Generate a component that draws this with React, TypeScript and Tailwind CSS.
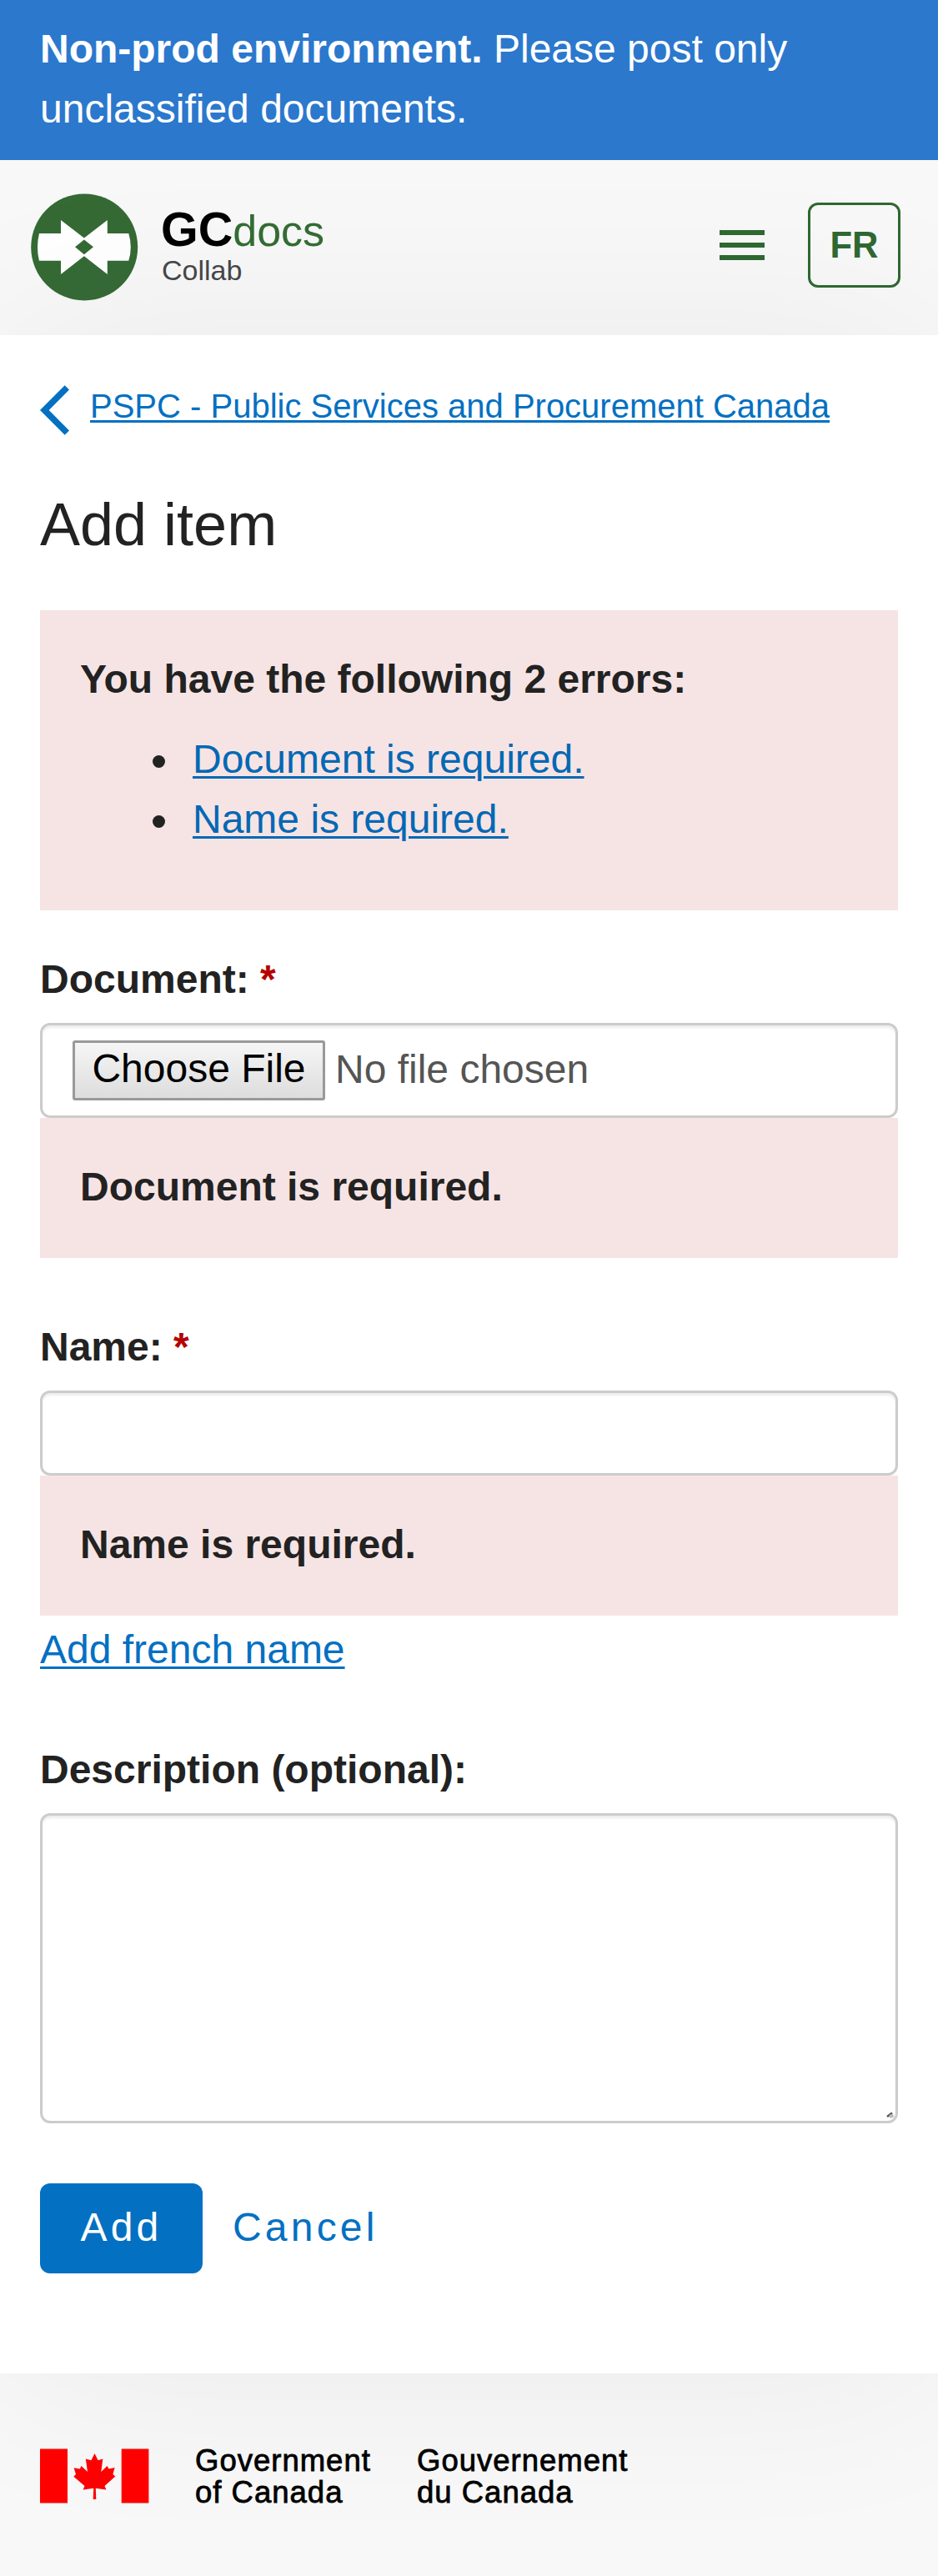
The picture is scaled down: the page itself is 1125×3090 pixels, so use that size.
import React from "react";

function LogoMark() {
  return (
    <svg className="block h-[129px] w-[129px] shrink-0" viewBox="0 0 129 129">
      <circle cx="64.2" cy="64.4" r="64" fill="#356a35" />
      <path
        fill="#fff"
        d="M10 48H36V32L63.9 53.5L91.8 32V48H117.3Q119.8 56 119.8 64.5Q119.8 73 117.3 80.8H91.8V97L63.9 75.3L36 97V80.8H10Q8 73 8 64.5Q8 56 10 48Z"
      />
      <path fill="#356a35" d="M63.9 55.5L75 64.3L63.9 73.3L53 64.3Z" />
    </svg>
  );
}

function Flag() {
  return (
    <svg className="block h-[66px] w-[131px] shrink-0" viewBox="0 0 131 66">
      <path fill="#f00" d="M0 .5H33V65.5H0ZM97.7 .5H130.4V65.5H97.7Z" />
      <path
        fill="#f00"
        d="M65.5 6L69.6 14.2L75.3 12.6L73.3 28L80.5 21L82.6 24.6L89.6 23.1L87.4 30.9L90.3 33.5L77.5 45L79.4 49.5L66.8 47.8L67.3 61H63.7L64.2 47.8L51.6 49.5L53.5 45L40.3 33.7L43 30.9L40.6 23.3L47.8 24.6L49.5 21L57 28L54.8 12.6L61.4 14.2Z"
      />
    </svg>
  );
}

function Label({ children, required }: { children: React.ReactNode; required?: boolean }) {
  return (
    <label className="block font-bold">
      {children}
      {required && <span className="text-[#b50000]"> *</span>}
    </label>
  );
}

function ErrorLink({ children }: { children: React.ReactNode }) {
  return (
    <li className="flex items-center">
      <span className="mr-[33px] mt-[5px] h-[15px] w-[15px] rounded-full bg-[#222222]" />
      <a className="text-[#0468b4] underline decoration-[3px] underline-offset-[4px]">{children}</a>
    </li>
  );
}

const field =
  "block w-full rounded-[12px] border-[3px] border-[#cccccc] bg-white shadow-[inset_0_3px_3px_rgba(0,0,0,0.075)]";

export default function App() {
  return (
    <div className="flex h-[3090px] w-[1125px] flex-col overflow-hidden bg-[#f8f8f8] font-['Liberation_Sans',Arial,sans-serif] text-[48px] leading-[72px] text-[#222222]">
      <div className="relative z-10 h-[192px] bg-[#2b78cd] px-12 pt-[23px] text-white">
        <strong>Non-prod environment.</strong> Please post only
        <br />
        unclassified documents.
      </div>

      <header className="flex h-[210px] pl-[37px] pr-[45px]">
        <div className="pt-[40px]">
          <LogoMark />
        </div>
        <div className="ml-[27px] pt-[52px]">
          <div className="h-[63px] text-[52px] leading-[63px] whitespace-nowrap text-[#346d34]">
            <span className="text-[57.5px] font-bold text-black">GC</span>docs
          </div>
          <div className="h-[34px] pl-px text-[34px] leading-[34px] text-[#474749]">Collab</div>
        </div>
        <div className="ml-auto mt-[51px] flex h-[102px] items-center">
          <div className="mr-[52px] flex w-[54px] flex-col gap-[9px]">
            <div className="h-[6px] bg-[#2f6932]" />
            <div className="h-[6px] bg-[#2f6932]" />
            <div className="h-[6px] bg-[#2f6932]" />
          </div>
          <button className="h-[102px] w-[111px] rounded-[12px] border-[3px] border-[#2f6932] text-[43.5px] leading-[96px] font-bold text-[#2f6932]">
            FR
          </button>
        </div>
      </header>

      <main className="relative h-[2445px] bg-white px-12 shadow-[0_0_225px_rgba(0,0,0,0.058)]">
        <div className="flex h-[102px] pt-[60px] text-[#0470c2]">
          <svg className="h-[60px] w-[36px] shrink-0" viewBox="0 0 36 60">
            <path d="M0 30L29.7 .3L35 5.5L10.7 30L35 54.5L29.7 59.7Z" fill="currentColor" />
          </svg>
          <a className="ml-6 text-[40px] leading-[50px] whitespace-nowrap underline decoration-[3px] underline-offset-[3px]">
            PSPC - Public Services and Procurement Canada
          </a>
        </div>
        <h1 className="mt-[85px] text-[72px] leading-[80px]">Add item</h1>

        <section className="mt-[63px] h-[360px] bg-[#f6e4e4] px-12 pt-[47px]">
          <p className="font-bold">You have the following 2 errors:</p>
          <ul className="mt-6 pl-[87px]">
            <ErrorLink>Document is required.</ErrorLink>
            <ErrorLink>Name is required.</ErrorLink>
          </ul>
        </section>

        <div className="mt-[47px]">
          <Label required>Document:</Label>
          <div className={field + " mt-[16px] flex h-[114px] pl-9 pt-[18px] text-[#555555]"}>
            <button className="h-[72px] w-[303px] rounded-[3px] border-[3px] border-[#999999] bg-linear-to-b from-[#f6f6f6] to-[#dddddd] pb-[4px] leading-[62px] whitespace-nowrap text-black">
              Choose File
            </button>
            <span className="ml-3 leading-[70px]">No file chosen</span>
          </div>
          <p className="h-[168px] bg-[#f6e4e4] px-12 pt-[47px] font-bold">Document is required.</p>
        </div>

        <div className="mt-[71px]">
          <Label required>Name:</Label>
          <input className={field + " mt-[16px] h-[102px]"} />
          <p className="h-[168px] bg-[#f6e4e4] px-12 pt-[47px] font-bold">Name is required.</p>
          <a className="mt-[5px] block text-[#0470c2] underline decoration-[3px] underline-offset-[4px]">Add french name</a>
        </div>

        <div className="mt-[72px]">
          <Label>Description (optional):</Label>
          <div className={field + " mt-[16px] flex h-[372px] items-end justify-end p-[2px]"}>
            <svg className="h-[9px] w-[9px]" viewBox="0 0 9 9">
              <path d="M1 6L7 1.5" stroke="#555" strokeWidth="2.6" />
              <path d="M4 6L8.5 4.5" stroke="#bbb" strokeWidth="4" />
            </svg>
          </div>
        </div>

        <div className="mt-[72px] flex h-[108px] tracking-[4.2px]">
          <button className="w-[195px] rounded-[12px] bg-[#0470c2] pb-[2px] leading-[106px] text-white">Add</button>
          <a className="ml-9 leading-[106px] text-[#0470c2]">Cancel</a>
        </div>
      </main>

      <footer className="relative flex px-12 pt-[90px]">
        <Flag />
        <div className="ml-[55px] mt-[-4px] w-[266px] text-[36.5px] leading-[38px] tracking-[1px] text-black [-webkit-text-stroke:0.8px_#000]">
          Government<br />of Canada
        </div>
        <div className="mt-[-4px] text-[36.5px] leading-[38px] tracking-[1px] text-black [-webkit-text-stroke:0.8px_#000]">
          Gouvernement<br />du Canada
        </div>
      </footer>
    </div>
  );
}
